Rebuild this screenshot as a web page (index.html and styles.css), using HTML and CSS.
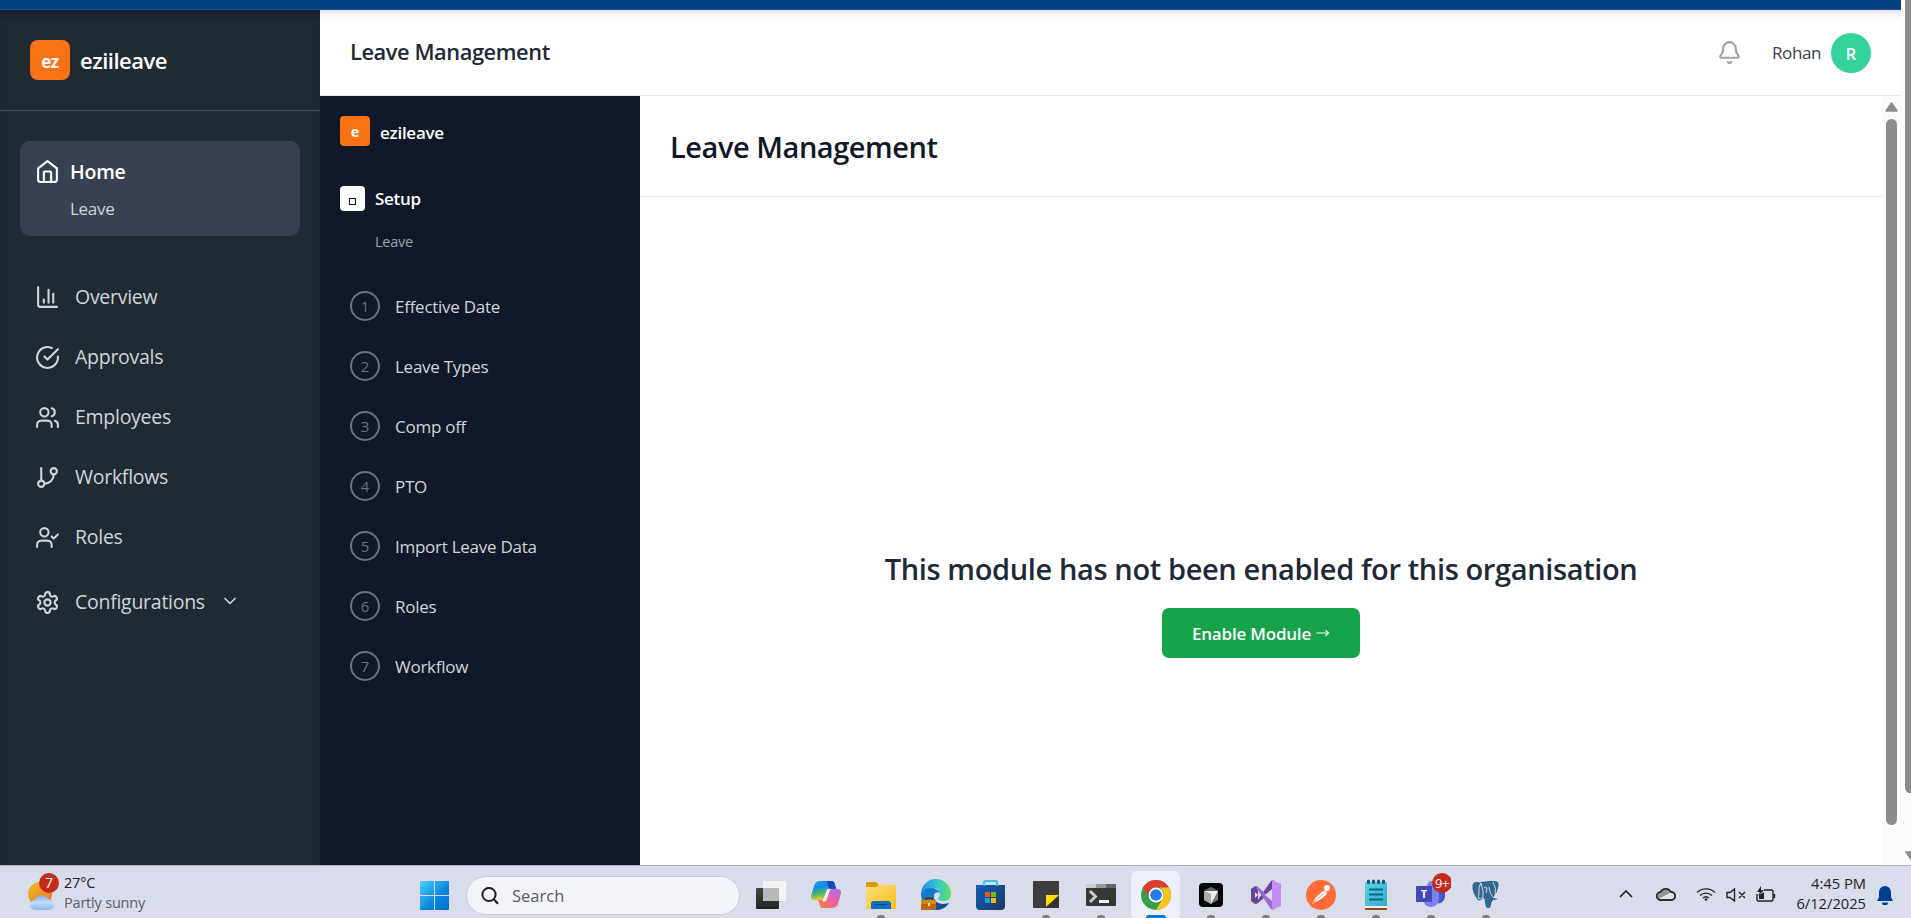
FILE: index.html
```html
<!DOCTYPE html>
<html lang="en">
<head>
<meta charset="utf-8">
<title>Leave Management</title>
<link rel="stylesheet" href="styles.css">
</head>
<body>
<div class="screen">
  <div class="viewport">
    <div class="page">
      <div class="topbar"></div>
      <div class="app">
        <aside class="sidebar">
          <div class="brand"><span class="brand-logo">ez</span><span class="brand-name">eziileave</span></div>
          <div class="home-card">
            <div class="home-row">
              <svg class="ico" viewBox="0 0 24 24"><path d="m3 9 9-7 9 7v11a2 2 0 0 1-2 2H5a2 2 0 0 1-2-2z"/><path d="M8.500 22v-9a1 1 0 0 1 1-1h5a1 1 0 0 1 1 1v9"/></svg>
              <span class="home-title">Home</span>
            </div>
            <div class="home-sub">Leave</div>
          </div>
          <nav class="nav">
            <div class="nav-item"><svg class="ico" viewBox="0 0 24 24"><path d="M3 2v17a2 2 0 0 0 2 2h16"/><path d="M8.500 17v-3M13 17V4.500M17.500 17V8.500"/></svg><span>Overview</span></div>
            <div class="nav-item"><svg class="ico" viewBox="0 0 24 24"><path d="M22 11.080V12a10 10 0 1 1-5.930-9.140"/><path d="m9 11 3 3L22 4"/></svg><span>Approvals</span></div>
            <div class="nav-item"><svg class="ico" viewBox="0 0 24 24"><path d="M16 21v-2a4 4 0 0 0-4-4H6a4 4 0 0 0-4 4v2"/><circle cx="9" cy="7" r="4"/><path d="M22 21v-2a4 4 0 0 0-3-3.870M16 3.130a4 4 0 0 1 0 7.750"/></svg><span>Employees</span></div>
            <div class="nav-item"><svg class="ico" viewBox="0 0 24 24"><path d="M6 3v12"/><circle cx="18" cy="6" r="3"/><circle cx="6" cy="18" r="3"/><path d="M18 9a9 9 0 0 1-9 9"/></svg><span>Workflows</span></div>
            <div class="nav-item"><svg class="ico" viewBox="0 0 24 24"><path d="M16 21v-2a4 4 0 0 0-4-4H6a4 4 0 0 0-4 4v2"/><circle cx="9" cy="7" r="4"/><path d="m16 11 2 2 4-4"/></svg><span>Roles</span></div>
            <div class="nav-item nav-config"><svg class="ico" viewBox="0 0 24 24"><path d="M12.220 2h-.440a2 2 0 0 0-2 2v.180a2 2 0 0 1-1 1.730l-.430.250a2 2 0 0 1-2 0l-.150-.080a2 2 0 0 0-2.730.730l-.220.380a2 2 0 0 0 .730 2.730l.150.100a2 2 0 0 1 1 1.720v.510a2 2 0 0 1-1 1.740l-.150.090a2 2 0 0 0-.730 2.730l.220.380a2 2 0 0 0 2.730.730l.150-.080a2 2 0 0 1 2 0l.430.250a2 2 0 0 1 1 1.730V20a2 2 0 0 0 2 2h.440a2 2 0 0 0 2-2v-.180a2 2 0 0 1 1-1.730l.430-.250a2 2 0 0 1 2 0l.150.080a2 2 0 0 0 2.730-.730l.220-.390a2 2 0 0 0-.730-2.730l-.150-.080a2 2 0 0 1-1-1.740v-.500a2 2 0 0 1 1-1.740l.150-.090a2 2 0 0 0 .730-2.730l-.220-.380a2 2 0 0 0-2.730-.730l-.150.080a2 2 0 0 1-2 0l-.430-.250a2 2 0 0 1-1-1.730V4a2 2 0 0 0-2-2z"/><circle cx="12" cy="12" r="3"/></svg><span>Configurations</span><svg class="chev" viewBox="0 0 24 24"><path d="m6 9 6 6 6-6"/></svg></div>
          </nav>
        </aside>
        <div class="content">
          <header class="header">
            <div class="header-title">Leave Management</div>
            <div class="user">
              <svg class="bell" viewBox="0 0 24 24"><path d="M10.268 21a2 2 0 0 0 3.464 0"/><path d="M3.262 15.326A1 1 0 0 0 4 17h16a1 1 0 0 0 .740-1.673C19.410 13.956 18 12.499 18 8A6 6 0 0 0 6 8c0 4.499-1.411 5.956-2.738 7.326"/></svg>
              <span class="user-name">Rohan</span>
              <span class="avatar">R</span>
            </div>
          </header>
          <div class="module">
            <aside class="steps">
              <div class="mod-brand"><span class="mod-logo">e</span><span>ezileave</span></div>
              <div class="setup"><span class="setup-box"><i></i></span><span>Setup</span></div>
              <div class="setup-sub">Leave</div>
              <div class="step"><b>1</b><span>Effective Date</span></div>
              <div class="step"><b>2</b><span>Leave Types</span></div>
              <div class="step"><b>3</b><span>Comp off</span></div>
              <div class="step"><b>4</b><span>PTO</span></div>
              <div class="step"><b>5</b><span>Import Leave Data</span></div>
              <div class="step"><b>6</b><span>Roles</span></div>
              <div class="step"><b>7</b><span>Workflow</span></div>
            </aside>
            <main class="main">
              <h1 class="title">Leave Management</h1>
              <div class="empty">
                <h2 class="empty-title">This module has not been enabled for this organisation</h2>
                <button class="enable">Enable Module <svg class="arrow" viewBox="0 0 14 10"><path d="M0.500 5h12M9.500 2.200 12.500 5l-3 2.800"/></svg></button>
              </div>
            </main>
            <div class="inner-scroll"><svg class="up" viewBox="0 0 13 10"><path d="M6.500 1 12 9H1z"/></svg><div class="thumb"></div></div>
          </div>
        </div>
      </div>
    </div>
    <div class="outer-scroll"><div class="outer-thumb"></div><svg class="down" viewBox="0 0 13 10"><path d="M1 1h11L6.500 9z"/></svg></div>
  </div>

  <footer class="taskbar">
    <div class="weather">
      <svg class="weather-ico" viewBox="0 0 32 40"><defs><linearGradient id="sun" x1="0" y1="0" x2="1" y2="1"><stop offset="0" stop-color="#edc32f"/><stop offset="1" stop-color="#f06a14"/></linearGradient><linearGradient id="cloud" x1="0" y1="0" x2="0" y2="1"><stop offset="0" stop-color="#7ba8ec"/><stop offset=".5" stop-color="#c4dcfa"/><stop offset="1" stop-color="#8fb4f0"/></linearGradient></defs><circle cx="12" cy="21" r="12" fill="url(#sun)"/><path d="M7 37a5 5 0 0 1 0-10 7 7 0 0 1 13-1 5.600 5.600 0 0 1 2 11z" fill="url(#cloud)"/><circle cx="21" cy="10" r="10" fill="#c42b1c"/><text x="21" y="15" text-anchor="middle" fill="#fff" font-size="14">7</text></svg>
      <div class="weather-text"><div class="temp">27°C</div><div class="cond">Partly sunny</div></div>
    </div>
    <svg class="start" viewBox="0 0 29 29"><defs><linearGradient id="win" x1="0" y1="0" x2="1" y2="1" ><stop offset="0" stop-color="#4cd0ff"/><stop offset=".6" stop-color="#0a84dc"/><stop offset="1" stop-color="#0070cf"/></linearGradient></defs><path fill="url(#win)" d="M1 0h13v14H0V1a1 1 0 0 1 1-1zM15 0h13a1 1 0 0 1 1 1v13H15zM0 15h14v14H1a1 1 0 0 1-1-1zM15 15h14v13a1 1 0 0 1-1 1H15z"/></svg>
    <div class="search"><svg viewBox="0 0 18 18"><circle cx="8" cy="7.500" r="6.600"/><path d="m12.800 12.300 4.200 4.400"/></svg><span>Search</span></div>
    <div class="apps">
      <div class="app-slot"><svg viewBox="0 0 32 32"><defs><linearGradient id="tv" x1="0" y1="0" x2="0" y2="1"><stop offset="0" stop-color="#454543"/><stop offset="1" stop-color="#222"/></linearGradient></defs><rect x="1" y="9" width="23" height="21" rx="1" fill="url(#tv)"/><rect x="8" y="2" width="23" height="20" rx="1" fill="#f4f4f4"/><path d="M8 9h16v13H9a1 1 0 0 1-1-1z" fill="#b9b9b9"/></svg></div>
      <div class="app-slot"><svg viewBox="0 0 32 32"><defs><linearGradient id="cp1" x1="0" y1="0" x2=".3" y2="1"><stop offset="0" stop-color="#1aa0e8"/><stop offset=".4" stop-color="#168ee0"/><stop offset=".7" stop-color="#4cb963"/><stop offset="1" stop-color="#e8c81e"/></linearGradient><linearGradient id="cp2" x1="1" y1="0" x2="0" y2="1"><stop offset="0" stop-color="#a56cf0"/><stop offset=".45" stop-color="#e563a8"/><stop offset="1" stop-color="#ff7a3c"/></linearGradient></defs><path d="M16 2h6q2 0 2.800 3l1.200 4h-5q-4 0-5 4l-2 6q-1 2-4 2H5q-4 0-4-4l3-10q1.500-5 6-5z" fill="url(#cp1)"/><path d="M16 2h6q2 0 3 4l1 4h-6q-2-1-2-4 0-3-2-4z" fill="#1549bf"/><path d="M27 10q4 0 4 4l-3 11q-1.500 4-6 4h-9q-3 0-3.500-4L8 21h5q3 0 4-4l2-4q1-3 4-3z" fill="url(#cp2)"/><path d="M17 11h3l-3.500 10q-.5 1.500-2 1.500h-2z" fill="#eef0fa"/></svg></div>
      <div class="app-slot run"><svg viewBox="0 0 32 32"><defs><linearGradient id="fd" x1="0" y1="0" x2="1" y2="1"><stop offset="0" stop-color="#ffe07c"/><stop offset="1" stop-color="#fbbb18"/></linearGradient></defs><path d="M1 4q0-1 1-1h9l3 3v5H1z" fill="#dc9b05"/><path d="M1 8h10l3-2h16q1 0 1 1v22q0 1-1 1H1z" fill="url(#fd)"/><path d="M6 30v-5q0-3 3-3h14q3 0 3 3v5z" fill="#0f6fbd"/><path d="M10 25.500h12" stroke="#073e75"/></svg></div>
      <div class="app-slot"><svg viewBox="0 0 32 32"><defs><linearGradient id="eg" x1="0" y1="0" x2="1" y2="0"><stop offset="0" stop-color="#178fdc"/><stop offset=".5" stop-color="#31c6dc"/><stop offset="1" stop-color="#63e05c"/></linearGradient></defs><path d="M1 15A15 15 0 0 1 31 15q0 7-7 7-6 0-6-3 2-1 2-4-1-6-7-6-8 0-12 6z" fill="url(#eg)"/><path d="M1 15q3-6 10-6 6 0 9 5-5-2-6 2-1 7 6 10 5 1 9-2-4 7-12 7Q2 31 1 15z" fill="#1377ca"/><path d="M14 20q4 7 15 4-5 7-14 7z" fill="#154d99"/><path d="M1 21h15v9q0 1-1 1H1z" fill="#b9690b"/><path d="M1 21h15v4H1z" fill="#d98611"/><path d="M6 21v-2h6v2" fill="none" stroke="#573008" stroke-width="1.500"/><rect x="8" y="24" width="2" height="3" fill="#ffd75d"/></svg></div>
      <div class="app-slot"><svg viewBox="0 0 32 32"><defs><linearGradient id="st" x1="0" y1="0" x2="1" y2="1"><stop offset="0" stop-color="#0b63b8"/><stop offset="1" stop-color="#1f3561"/></linearGradient></defs><path d="M1 6h29v21q0 4-4 4H5q-4 0-4-4z" fill="url(#st)"/><path d="M9 7V3.500q0-1.500 1.500-1.500h10q1.500 0 1.500 1.500V7" fill="none" stroke="#36c4f5" stroke-width="2"/><path fill="#f25022" d="M10 13h5v5h-5z"/><path fill="#7fba00" d="M16 13h5v5h-5z"/><path fill="#00a4ef" d="M10 19h5v5h-5z"/><path fill="#ffb900" d="M16 19h5v5h-5z"/></svg></div>
      <div class="app-slot run"><svg viewBox="0 0 32 32"><path d="M3 3q0-1 1-1h24q1 0 1 1v13L17 29H4q-1 0-1-1z" fill="#3d3d3d"/><path d="M16 16h13v13H16z" fill="#333"/><path d="M16 16h13L16 28z" fill="#ffdd00"/></svg></div>
      <div class="app-slot run"><svg viewBox="0 0 32 32"><rect x="1" y="5" width="30" height="22" rx="1" fill="#363636"/><path d="M2 5h9v4H1V6q0-1 1-1z" fill="#ccc"/><path d="M11 5h10v4H11z" fill="#999"/><path d="M21 5h9q1 0 1 1v3H21z" fill="#666"/><path d="m5 12 5.500 5.500L5 23" fill="none" stroke="#ccc" stroke-width="3"/><path d="M14 21h10v3H14z" fill="#f4f4f4"/></svg></div>
      <div class="app-slot active"><svg viewBox="0 0 32 32"><circle cx="16" cy="16" r="15" fill="#34a04c"/><path d="M3 8.500A15 15 0 0 1 29 8.500H16a7.500 7.500 0 0 0-6.500 11.300z" fill="#e33b2e"/><path d="M29 8.500A15 15 0 0 1 16 31l6.500-11.300A7.500 7.500 0 0 0 20 9V8.500z" fill="#fcc21b"/><circle cx="16" cy="16" r="7.500" fill="#fff"/><circle cx="16" cy="16" r="5.800" fill="#2a7de9"/></svg></div>
      <div class="app-slot run"><svg viewBox="0 0 32 32"><rect x="4" y="4" width="24" height="24" rx="4" fill="#050505"/><path d="m16 8 7 4v9l-7 4-7-4v-9z" fill="#777"/><path d="m9 12 7 3v10l-7-4z" fill="#aaa"/><path d="M9 12h14l-7 13v-10z" fill="#eee"/><path d="m9 12 7-4 7 4z" fill="#666"/></svg></div>
      <div class="app-slot run"><svg viewBox="0 0 32 32"><path d="M1 10 5 7l3 1v16l-3 1-4-3z" fill="#6d4399"/><path d="M5 13v6l3-3z" fill="#dadcea"/><path d="m5 25 3-1L24 10V1L21 2z" fill="#6b429b"/><path d="m5 7 3 1 16 14v9l-3-1z" fill="#9a6ad0"/><path d="m22 1 9 4v22l-9 4z" fill="#c48bf5"/><path d="m22 10-7 6 7 6z" fill="#dadcea"/></svg></div>
      <div class="app-slot run"><svg viewBox="0 0 32 32"><circle cx="16" cy="16" r="15" fill="#ff6c37"/><circle cx="22" cy="9" r="3" fill="#fff"/><path d="m7 25 4-7 7-6q3-1 4 2l-1 2-5 4z" fill="#fff"/><path d="m8 24 10-9" stroke="#ff6c37" stroke-width=".8"/></svg></div>
      <div class="app-slot run"><svg viewBox="0 0 32 32"><defs><linearGradient id="np" x1="0" y1="0" x2="1" y2="1"><stop offset="0" stop-color="#60d1e8"/><stop offset="1" stop-color="#34abc8"/></linearGradient></defs><path d="M5 3h22v24H5z" fill="url(#np)"/><path d="M5 27h22v2H5z" fill="#f5efe6"/><path d="M5 29h22v1q0 1-1 1H6q-1 0-1-1z" fill="#8c4a12"/><path d="M9 10.500h14M9 15.500h14M9 20.500h14" stroke="#08648a" stroke-width="2"/><path d="M8.500 2v1.500M13.500 2v1.500M18.500 2v1.500M23.500 2v1.500" stroke="#0c5874" stroke-width="3" stroke-linecap="round"/></svg></div>
      <div class="app-slot run"><svg class="wide" viewBox="0 0 40 40"><circle cx="29" cy="12" r="4" fill="#5059c9"/><path d="M20 17h14v9a7 7 0 0 1-9 6z" fill="#4c55c4"/><circle cx="21" cy="15" r="5" fill="#7b83eb"/><path d="M12 18h16v10a8 8 0 0 1-16 0z" fill="#7b83eb"/><rect x="5" y="15" width="16" height="16" rx="1" fill="#4049b8"/><text x="13" y="27" text-anchor="middle" fill="#fff" font-size="11" font-weight="700">T</text><circle cx="31" cy="12" r="10" fill="#c42b1c"/><text x="31" y="16.500" text-anchor="middle" fill="#fff" font-size="13" letter-spacing="-.5">9+</text></svg></div>
      <div class="app-slot run"><svg viewBox="0 0 32 32"><g stroke="#f2f5fa" stroke-width=".8" fill="#336791"><path d="M8 22Q1 13 2 6q1-5 8-3 3-1.500 6-1 4-1 8-.5 6 0 5 6-1 6-5 11 2 1 5 .5-1 2.500-6 2.500l-1 2q-.5 6-4 6-3 0-3.500-6-.5-2-.5-4-3 3-6 2.500z"/><path d="M11 4q-3 4-2 9 0 5-1 6 2 2 5-.5 1-6-2-14.500zM23 3q4 6 2 14M19 8q1 8 5 11M14 9q2-2 3 0l-1 5" fill="none"/></g></svg></div>
    </div>
    <div class="tray">
      <svg class="tray-up" viewBox="0 0 14 8"><path d="m1 7 6-6 6 6"/></svg>
      <svg class="tray-cloud" viewBox="0 0 20 14"><path d="M5 13a4 4 0 0 1-.5-8A6 6 0 0 1 15 5a4 4 0 0 1 .5 8z" fill="#e4e4e4"/><path d="M4.500 5A6 6 0 0 1 15 5q-1 1-3 2L2 12q-2.500-5 2.500-7z" fill="#929292" stroke="none"/><path d="M5 13a4 4 0 0 1-.5-8A6 6 0 0 1 15 5a4 4 0 0 1 .5 8z"/></svg>
      <svg class="tray-wifi" viewBox="0 0 20 14"><path d="M1 5.500a13 13 0 0 1 18 0M4 8.500a8.700 8.700 0 0 1 12 0M7 11a4.500 4.500 0 0 1 6 0"/><circle cx="10" cy="12.500" r="1.300"/></svg>
      <svg class="tray-mute" viewBox="0 0 20 14"><path d="M1 4.500h3L8.500 1v12L4 9.500H1zM13 4l6 6M19 4l-6 6"/></svg>
      <svg class="tray-bat" viewBox="0 0 20 16"><path d="M8 4h7.500q1.500 0 1.500 1.500v8q0 1.500-1.500 1.500h-13Q1 15 1 13.500V8M18.500 8v4"/><path d="M5 0 1 6h3L2 10l6-6H5zM3 13V9l5-3v7z" fill="#222" stroke="none"/></svg>
      <div class="clock"><div class="time">4:45 PM</div><div class="date">6/12/2025</div></div>
      <svg class="tray-bell" viewBox="0 0 16 19"><path d="M8 0a6 6 0 0 1 6 6v5l2 4H0l2-4V6a6 6 0 0 1 6-6zM5 16.500h6a3 3 0 0 1-6 0z"/></svg>
    </div>
  </footer>
</div>
</body>
</html>
```
FILE: styles.css
```css
* { box-sizing: border-box; }
body { margin: 0; font-family: "Open Sans", "Noto Sans", sans-serif; overflow: hidden; }
h1, h2 { margin: 0; }
svg { display: block; flex: none; }

.screen { width: 1911px; height: 918px; display: flex; flex-direction: column; }
.viewport { height: 865px; display: flex; }
.page { width: 1901px; display: flex; flex-direction: column; }
.topbar { height: 10px; background: #00407f; border-bottom: 1px solid #15559a; }
.app { flex: 1; display: flex; }

.sidebar { width: 320px; background: #1f2a33; box-shadow: inset 0 10px 9px -8px #151d24; color: #d1d5db; }
.brand { height: 101px; padding: 30px 30px 0; display: flex; gap: 10px; border-bottom: 1px solid #4b5563; }
.brand-logo { width: 40px; height: 40px; border-radius: 8px; background: #f97316; color: #fff; font-size: 17px; font-weight: 700; line-height: 43px; letter-spacing: -.3px; text-align: center; }
.brand-name { color: #fff; font-size: 22px; font-weight: 600; line-height: 40px; letter-spacing: -.5px; }
.home-card { margin: 30px 20px 0; height: 95px; padding: 15px; border-radius: 10px; background: #394151; }
.home-row { display: flex; gap: 10px; color: #fff; height: 30px; align-items: center; }
.home-title { font-size: 19.500px; font-weight: 600; line-height: 32px; padding-top: 2px; letter-spacing: -.2px; }
.home-sub { margin-left: 35px; font-size: 17px; line-height: 30px; padding-top: 8px; letter-spacing: -.3px; }
.ico { width: 25px; height: 25px; fill: none; stroke: currentColor; stroke-width: 2; stroke-linecap: round; stroke-linejoin: round; }
.nav { padding: 31px 35px 0; }
.nav-item { height: 60px; display: flex; align-items: center; gap: 15px; font-size: 19.500px; letter-spacing: -.27px; }
.nav-item span { padding-bottom: 2px; }
.nav-config { margin-top: 5px; }
.chev { width: 20px; height: 20px; margin-bottom: 2px; fill: none; stroke: currentColor; stroke-width: 2; stroke-linecap: round; stroke-linejoin: round; }

.content { flex: 1; display: flex; flex-direction: column; }
.header { height: 86px; padding: 0 30px; border-bottom: 1px solid #e5e7eb; background: linear-gradient(#e5e5e7, #fafafa 7px, #fff 14px); display: flex; align-items: center; justify-content: space-between; }
.header-title { color: #1f2937; font-size: 21.800px; font-weight: 600; letter-spacing: -.42px; padding-bottom: 2px; }
.user { display: flex; align-items: center; }
.bell { width: 25px; height: 25px; fill: none; stroke: #9ca3af; stroke-width: 2; stroke-linecap: round; margin-right: 30px; }
.user-name { color: #374151; font-size: 17px; letter-spacing: -.4px; margin-right: 10px; }
.avatar { width: 40px; height: 40px; border-radius: 50%; background: #34d399; color: #fff; font-size: 17px; font-weight: 600; line-height: 41px; text-align: center; }
.module { flex: 1; display: flex; }

.steps { width: 320px; padding: 20px; background: #111827; color: #d1d5db; font-size: 17px; letter-spacing: -.26px; }
.mod-brand { display: flex; gap: 10px; height: 30px; color: #fff; font-weight: 600; line-height: 33px; }
.mod-logo { width: 30px; height: 30px; border-radius: 4px; background: #f97316; font-size: 14.500px; font-weight: 700; line-height: 31px; text-align: center; }
.setup { margin-top: 40px; display: flex; gap: 10px; height: 25px; line-height: 26px; color: #fff; font-weight: 600; }
.setup-box { width: 25px; height: 25px; border-radius: 4px; background: #fff; padding: 12px 0 0 9px; }
.setup-box i { display: block; width: 7px; height: 7px; border: 1px solid #111827; }
.setup-sub { margin: 20px 0 0 35px; height: 25px; line-height: 21px; font-size: 14.500px; color: #9ca3af; }
.step { margin-left: 10px; height: 60px; display: flex; align-items: center; gap: 15px; }
.setup-sub + .step { margin-top: 20px; }
.step b { width: 30px; height: 30px; border: 2px solid #6b7280; border-radius: 50%; color: #6b7280; font-size: 15px; font-weight: 400; line-height: 26px; text-align: center; letter-spacing: 0; }
.step span { padding-top: 1px; }

.main { flex: 1; display: flex; flex-direction: column; background: #fff; }
.title { height: 101px; padding: 0 30px; border-bottom: 1px solid #e5e7eb; font-size: 29px; font-weight: 600; line-height: 102px; letter-spacing: -.46px; color: #111827; }
.empty { flex: 1; display: flex; flex-direction: column; align-items: center; padding-top: 350px; }
.empty-title { font-size: 29px; font-weight: 600; line-height: 44px; letter-spacing: -.37px; color: #1f2937; white-space: nowrap; }
.enable { margin-top: 17px; width: 198px; height: 50px; border: 0; border-radius: 7px; background: #16a34a; color: #fff; font: inherit; font-size: 17px; font-weight: 600; letter-spacing: -.2px; display: flex; align-items: center; justify-content: center; gap: 5px; white-space: nowrap; }
.arrow { width: 14px; height: 10px; fill: none; stroke: #fff; stroke-width: 1.200; }

.inner-scroll { width: 19px; background: #fbfbfb; padding: 6px 0 0 3px; }
.up { width: 13px; height: 10px; }
.up path, .down path { fill: #8b8b8b; stroke: #8b8b8b; stroke-linejoin: round; stroke-width: 1.500; }
.thumb { margin: 7px 0 0 1px; width: 11px; height: 706px; border-radius: 6px; background: #8b8b8b; }
.outer-scroll { width: 10px; background: #fcfcfc; overflow: hidden; padding-left: 4px; }
.outer-thumb { width: 11px; height: 793px; border-radius: 0 0 6px 6px; background: #8b8b8b; }
.down { width: 13px; height: 10px; margin-top: 58px; }

.taskbar { height: 53px; background: #d9dcea; border-top: 1px solid #adb0bc; display: flex; align-items: flex-start; color: #222; overflow: hidden; }
.taskbar text { font-family: "Open Sans", sans-serif; }
.weather { width: 420px; padding: 7px 0 0 28px; display: flex; gap: 4px; }
.weather-ico { width: 32px; height: 40px; }
.weather-text { font-size: 14.500px; line-height: 20px; letter-spacing: -.2px; }
.cond { color: #5c5e66; }
.start { width: 29px; height: 29px; margin-top: 15px; }
.search { width: 274px; height: 39px; margin: 10px 0 0 17px; border: 1px solid #c5c9d9; border-radius: 20px; background: #f3f4fa; display: flex; align-items: center; padding-left: 14px; font-size: 16.500px; color: #5c5c60; }
.search svg { width: 18px; height: 18px; fill: none; stroke: #222; stroke-width: 2; margin-right: 13px; }
.search span { padding-bottom: 1px; }
.apps { display: flex; margin-left: 3px; }
.app-slot { width: 55px; height: 52px; display: flex; flex-direction: column; align-items: center; padding-top: 13px; }
.app-slot svg { width: 32px; height: 32px; }
.app-slot .wide { width: 40px; height: 40px; margin: -8px 0 0; }
.app-slot.run::after, .app-slot.active::after { content: ""; width: 8px; height: 6px; margin-top: 4px; border-radius: 3px; background: #7d7f88; flex: none; }
.app-slot.active { width: 49px; margin: 5px 3px 0; height: 49px; padding-top: 8px; border-radius: 6px; background: #edf0f8; }
.app-slot.active::after { width: 20px; background: #0078d4; }
.tray { flex: 1; display: flex; align-items: flex-start; }
.tray svg { fill: none; stroke: #222; stroke-width: 1.400; }
.tray .tray-up { width: 14px; height: 8px; margin: 24px 0 0 106px; stroke-width: 1.700; }
.tray-cloud { width: 20px; height: 14px; margin: 21px 0 0 23px; }
.tray-wifi { width: 20px; height: 14px; margin: 21px 0 0 20px; }
.tray-wifi circle { fill: #222; stroke: none; }
.tray-mute { width: 20px; height: 14px; margin: 22px 0 0 10px; }
.tray-bat { width: 20px; height: 16px; margin: 20px 0 0 10px; }
.clock { width: 90px; font-size: 14.700px; line-height: 20px; padding-top: 7px; text-align: right; white-space: nowrap; }
.tray .tray-bell { width: 16px; height: 19px; margin: 20px 0 0 11px; fill: #003e92; stroke: none; }
```
